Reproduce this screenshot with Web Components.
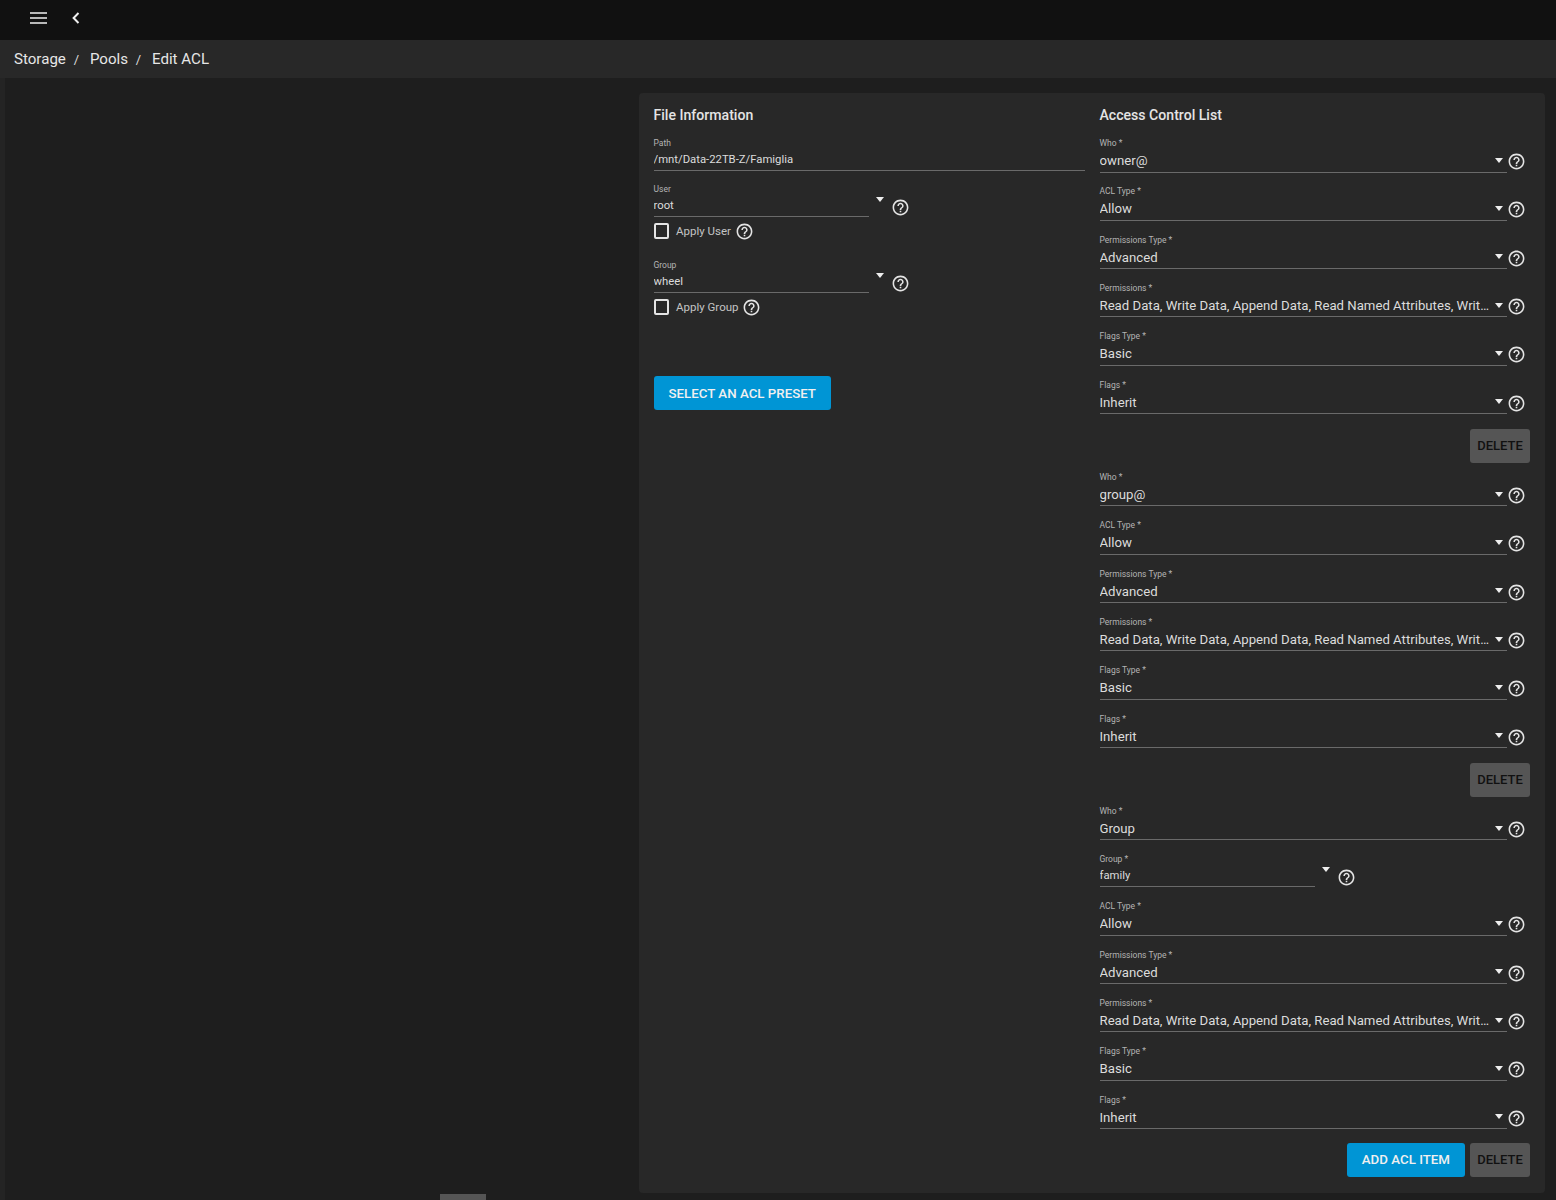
<!DOCTYPE html>
<html>
<head>
<meta charset="utf-8">
<title>Edit ACL</title>
<style>
html,body{margin:0;padding:0;height:1200px;overflow:hidden;background:#1e1e1e;font-family:Roboto,"Liberation Sans",sans-serif;}
</style>
</head>
<body>
<app-shell>
    <acl-card>
        <section-col heading="File Information" slot="left">
            <tn-field label="Path" value="/mnt/Data-22TB-Z/Famiglia" kind="input"></tn-field>
            <tn-field label="User" value="root" kind="combo"></tn-field>
            <tn-check label="Apply User"></tn-check>
            <tn-field label="Group" value="wheel" kind="combo" style="margin-top:18px"></tn-field>
            <tn-check label="Apply Group"></tn-check>
            <tn-button color="blue" style="margin-top:59px">SELECT AN ACL PRESET</tn-button>
        </section-col>
        <section-col heading="Access Control List" slot="right">
            <acl-entry who="owner@"></acl-entry>
            <div style="display:flex;justify-content:flex-end;height:44px;padding-top:2px;box-sizing:border-box"><tn-button>DELETE</tn-button></div>
            <acl-entry who="group@"></acl-entry>
            <div style="display:flex;justify-content:flex-end;height:44px;padding-top:2px;box-sizing:border-box"><tn-button>DELETE</tn-button></div>
            <acl-entry who="Group" group="family"></acl-entry>
            <div style="display:flex;justify-content:flex-end;gap:5px;margin-top:1px"><tn-button color="blue">ADD ACL ITEM</tn-button><tn-button>DELETE</tn-button></div>
        </section-col>
    </acl-card>
</app-shell>
<script>
const helpIcon = size => `<svg width="${size}" height="${size}" viewBox="0 0 24 24" fill="#e4e4e4" style="display:block;flex:none"><path d="M11 18h2v-2h-2v2zm1-16C6.48 2 2 6.48 2 12s4.48 10 10 10 10-4.48 10-10S17.52 2 12 2zm0 18c-4.41 0-8-3.59-8-8s3.59-8 8-8 8 3.59 8 8-3.59 8-8 8zm0-14c-2.21 0-4 1.79-4 4h2c0-1.1.9-2 2-2s2 .9 2 2c0 2-3 1.75-3 5h2c0-2.25 3-2.5 3-5 0-2.21-1.79-4-4-4z"/></svg>`;

class AppShell extends HTMLElement{
    constructor(){
        super();
        let shadow = this.attachShadow({mode: 'open'});
        shadow.innerHTML = `
<style>
:host{display:block;height:1200px;position:relative;overflow:hidden;color:#e4e4e4;}
.top{height:40px;background:#111;display:flex;align-items:center;padding:0 0 4px 30px;gap:25px;box-sizing:border-box;}
.crumbs{height:38px;background:#282828;display:flex;align-items:center;padding-left:14px;font-size:15.1px;color:#e6e6e6;box-sizing:border-box;}
.crumbs i{font-style:normal;font-size:13px;width:24px;padding-right:3px;box-sizing:border-box;text-align:center;color:#ddd;}
.main{display:flex;height:1122px;box-sizing:border-box;}
.strip{width:5px;background:#242424;flex:none;}
.content{flex:1;padding:15px 11px 7px 0;display:flex;justify-content:flex-end;box-sizing:border-box;}
.thumb{position:absolute;left:440px;bottom:0;width:46px;height:6px;background:#555;}
svg{display:block;}
</style>
<div class="top">
    <svg width="17" height="12" viewBox="0 0 17 12"><path d="M0 1h17M0 6h17M0 11h17" stroke="#f0f0f0" stroke-width="1.6"/></svg>
    <svg width="8" height="12" viewBox="0 0 8 12"><path d="M6.5 1 1.6 6l4.9 5" fill="none" stroke="#f0f0f0" stroke-width="2"/></svg>
</div>
<div class="crumbs"><span>Storage</span><i>/</i><span>Pools</span><i>/</i><span>Edit ACL</span></div>
<div class="main"><div class="strip"></div><div class="content"><slot></slot></div></div>
<div class="thumb"></div>`;
    }
}
customElements.define('app-shell', AppShell);

class AclCard extends HTMLElement{
    constructor(){
        super();
        let shadow = this.attachShadow({mode: 'open'});
        shadow.innerHTML = `
<style>
:host{display:flex;width:906px;height:1100px;background:#282828;border-radius:4px;padding:12px 15px 0 14.5px;gap:15px;box-sizing:border-box;}
.l{width:431px;flex:none;}
.r{width:430.5px;flex:none;}
</style>
<div class="l"><slot name="left"></slot></div>
<div class="r"><slot name="right"></slot></div>`;
    }
}
customElements.define('acl-card', AclCard);

class SectionCol extends HTMLElement{
    constructor(){
        super();
        let shadow = this.attachShadow({mode: 'open'});
        shadow.innerHTML = `
<style>
:host{display:block;}
h3{margin:0 0 12px;height:20px;line-height:20px;font-size:14.1px;font-weight:500;color:#e4e4e4;}
</style>
<h3></h3>
<slot></slot>`;
        shadow.querySelector('h3').textContent = this.getAttribute('heading');
    }
}
customElements.define('section-col', SectionCol);

class TnField extends HTMLElement{
    constructor(){
        super();
        const kind = this.getAttribute('kind') || 'select';
        let shadow = this.attachShadow({mode: 'open'});
        shadow.innerHTML = `
<style>
:host{display:flex;box-sizing:border-box;}
:host([kind=select]),:host(:not([kind])){height:48.33px;}
:host([kind=input]){height:46px;}
:host([kind=combo]){height:38px;}
.box{width:407px;flex:none;min-width:0;}
.label{font-size:8.5px;line-height:12px;height:12px;color:#b4b4b4;white-space:nowrap;}
.row{display:flex;align-items:center;height:22.5px;border-bottom:1.6px solid #6a6a6a;box-sizing:content-box;}
.value{flex:1;min-width:0;height:22.5px;font-size:13.2px;line-height:24.5px;color:#dcdcdc;white-space:nowrap;overflow:hidden;text-overflow:ellipsis;}
.caret{width:0;height:0;flex:none;border-left:4.4px solid transparent;border-right:4.4px solid transparent;border-top:5px solid #eee;}
.row .caret{margin:0 4px 0 5px;}
.help{margin-top:15px;}
:host([kind=input]) .box{width:431px;}
:host([kind=input]) .row,:host([kind=combo]) .row{height:21px;border-bottom-width:1.2px;}
:host([kind=input]) .value,:host([kind=combo]) .value{height:21px;font-size:11.3px;line-height:21px;}
:host([kind=combo]) .box{width:215px;}
.side{margin:14px 0 0 7px;}
:host([kind=combo]) .help{margin:14.5px 0 0 7px;}
</style>
<div class="box">
    <div class="label"></div>
    <div class="row"><div class="value"></div>${kind === 'select' ? '<div class="caret"></div>' : ''}</div>
</div>
${kind === 'combo' ? '<div class="caret side"></div>' : ''}
${kind !== 'input' ? `<div class="help">${helpIcon(19)}</div>` : ''}`;
        shadow.querySelector('.label').textContent = this.getAttribute('label');
        shadow.querySelector('.value').textContent = this.getAttribute('value');
    }
}
customElements.define('tn-field', TnField);

class TnCheck extends HTMLElement{
    constructor(){
        super();
        let shadow = this.attachShadow({mode: 'open'});
        shadow.innerHTML = `
<style>
:host{display:flex;align-items:center;height:20px;font-size:11.5px;color:#c4c4c4;}
.b{width:15.5px;height:15.5px;border:2px solid #e4e4e4;border-radius:2px;box-sizing:border-box;margin-right:7px;}
span{margin-right:4px;}
</style>
<div class="b"></div><span></span>${helpIcon(19)}`;
        shadow.querySelector('span').textContent = this.getAttribute('label');
    }
}
customElements.define('tn-check', TnCheck);

class TnButton extends HTMLElement{
    constructor(){
        super();
        let shadow = this.attachShadow({mode: 'open'});
        shadow.innerHTML = `
<style>
:host{display:inline-flex;align-items:center;justify-content:center;height:34px;padding:0 15px;background:#0095d5;color:#f0f0f0;border-radius:3px;font-size:13.3px;font-weight:500;box-sizing:border-box;white-space:nowrap;}
:host(:not([color])){background:#555;color:#111;padding:0 7px;width:60px;font-size:13px;}
</style>
<slot></slot>`;
    }
}
customElements.define('tn-button', TnButton);

class AclEntry extends HTMLElement{
    constructor(){
        super();
        const perms = 'Read Data, Write Data, Append Data, Read Named Attributes, Write Named Attributes, Execute';
        const group = this.getAttribute('group');
        let shadow = this.attachShadow({mode: 'open'});
        shadow.innerHTML = `
<style>:host{display:block;}</style>
<tn-field label="Who *" value="${this.getAttribute('who')}"></tn-field>
${group ? `<tn-field label="Group *" value="${group}" kind="combo" style="height:47px"></tn-field>` : ''}
<tn-field label="ACL Type *" value="Allow"></tn-field>
<tn-field label="Permissions Type *" value="Advanced"></tn-field>
<tn-field label="Permissions *" value="${perms}"></tn-field>
<tn-field label="Flags Type *" value="Basic"></tn-field>
<tn-field label="Flags *" value="Inherit"></tn-field>`;
    }
}
customElements.define('acl-entry', AclEntry);
</script>
</body>
</html>
